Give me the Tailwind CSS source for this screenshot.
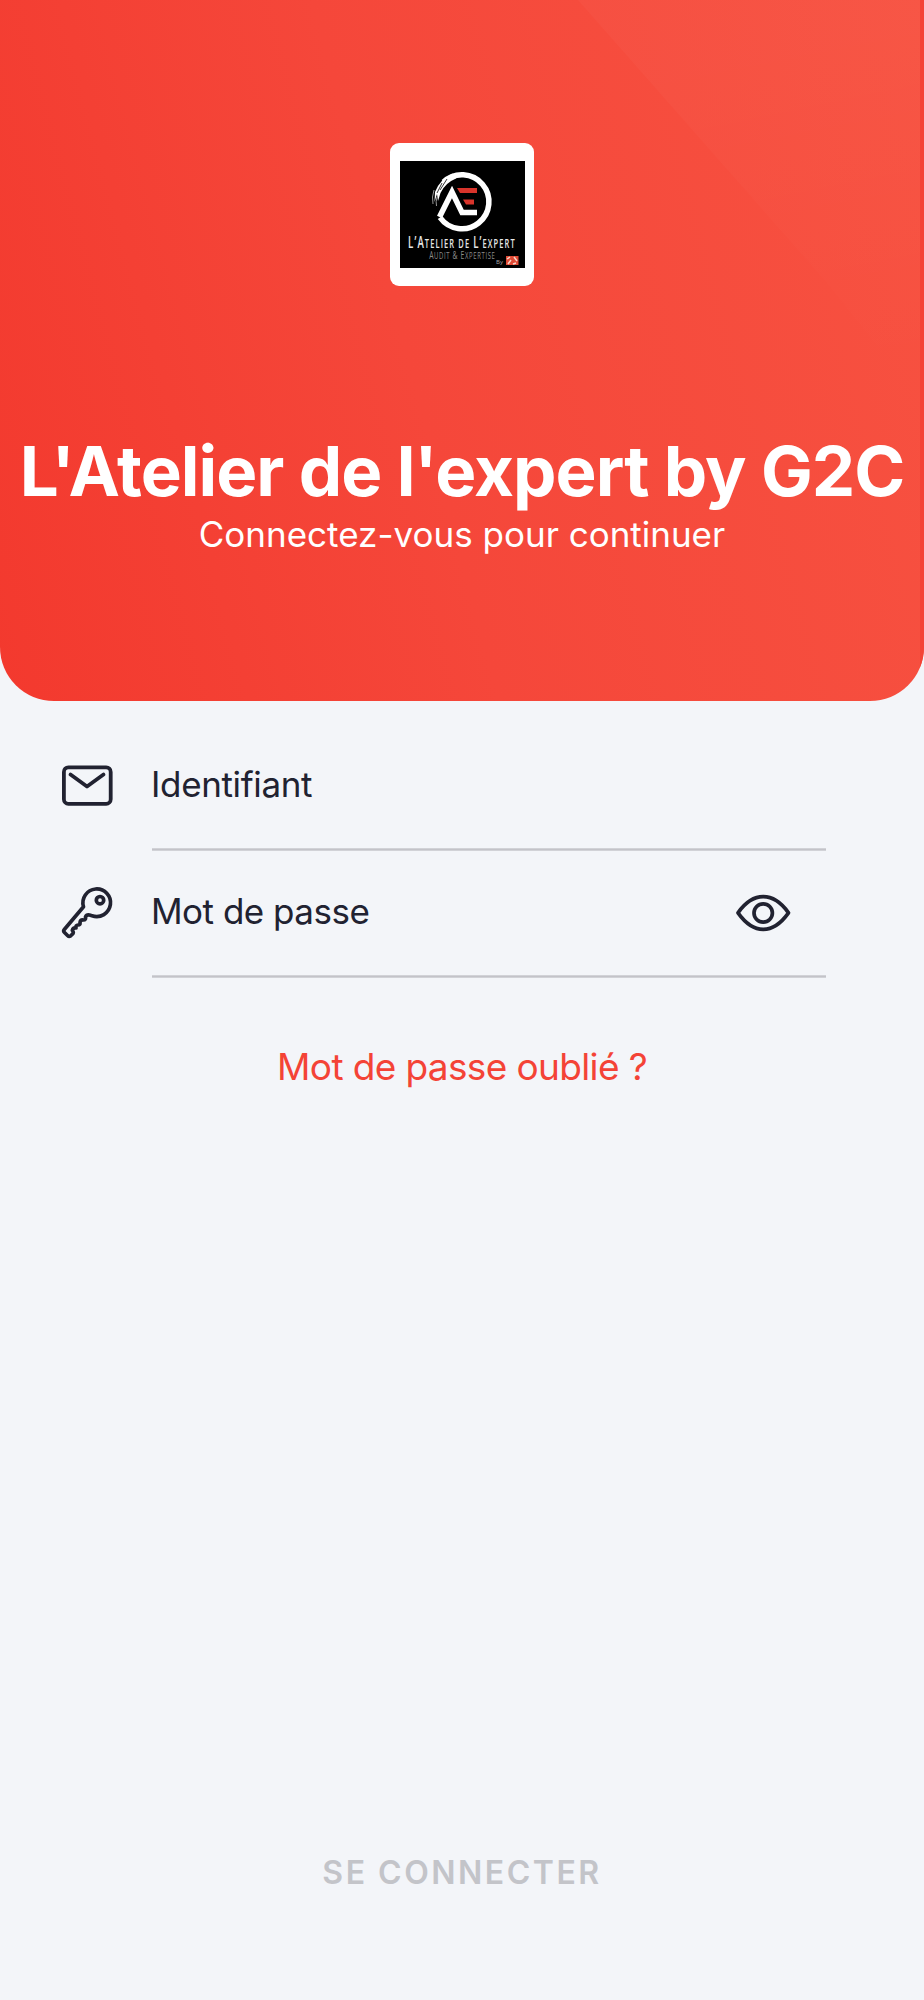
<!DOCTYPE html>
<html lang="fr">
<head>
    <meta charset="UTF-8">
    <meta name="viewport" content="width=device-width, initial-scale=1.0">
    <title>Connexion - L'Atelier de l'expert by G2C</title>
    <script src="https://cdn.jsdelivr.net/npm/@tailwindcss/browser@4"></script>
    <style>
        body { font-family: 'Inter', sans-serif; }
    </style>
</head>
<body class="bg-[#f3f5f9] text-[#212231]">

    <div class="w-[924px] h-[2000px] flex flex-col overflow-hidden">
        <header class="relative h-[701px] shrink-0 flex flex-col items-center rounded-b-[54px] overflow-hidden bg-linear-[75deg,#f3392e_0%,#f5473a_45%,#f75241_100%] text-white">
            <!-- Reflets du fond -->
            <svg class="absolute inset-0" width="924" height="701" viewBox="0 0 924 701" fill="none">
                <defs>
                    <linearGradient id="shine" x1="740" y1="60" x2="800" y2="400" gradientUnits="userSpaceOnUse">
                        <stop stop-color="#fff" stop-opacity=".024"/>
                        <stop offset="1" stop-color="#fff" stop-opacity="0"/>
                    </linearGradient>
                </defs>
                <path d="M578 0H920V400L828 284Z" fill="url(#shine)"/>
                <path d="M920 0H924V701H920Z" fill="#f44336"/>
            </svg>

            <div class="relative mt-[143px] w-[144px] h-[143px] shrink-0 rounded-[9px] bg-white flex items-center justify-center">
                <svg width="125" height="107" viewBox="0 0 125 107" fill="none">
                    <rect width="125" height="107" fill="#000"/>
                    <path d="M40 56.500A27 27 0 1 0 43.500 21" stroke="#fff" stroke-width="5.500"/>
                    <path d="M53 12.500L56 17.500Q45 22 40.500 32L38 40L37 33L34.500 41L35 31Q40 18 53 12.500Z" fill="#fff"/>
                    <path d="M42 22L37 32M47 18L40 29" stroke="#000" stroke-width=".8"/>
                    <path d="M33 43Q31.500 36 34 29M36.500 45Q35.500 41 37 36" stroke="#999" stroke-width="1"/>
                    <path d="M39.500 56L52 31L62 51.500H77" stroke="#fff" stroke-width="5.500"/>
                    <path d="M57 27H77V32H60ZM63 38.500H74V43.500H66Z" fill="#d9342b"/>
                    <!-- Lettres étroites et espacées, en petites capitales -->
                    <g transform="scale(.62 1)" font-family="Open Sans" font-weight="600">
                        <text x="13" y="87.500" textLength="172" font-size="15.500" fill="#e8e8e8">L’A<tspan font-size="12">TELIER DE </tspan>L’<tspan font-size="12">EXPERT</tspan></text>
                        <text x="47" y="98.500" textLength="106" font-size="11" font-weight="400" fill="#8c8c8c">A<tspan font-size="9.500">UDIT</tspan> &amp; E<tspan font-size="9.500">XPERTISE</tspan></text>
                    </g>
                    <text x="96" y="103" font-family="Open Sans" font-size="6" fill="#aaa">By</text>
                    <rect x="106" y="95" width="12.500" height="9" fill="#e04a35"/>
                    <path d="M107 98L110 96M108 103L111 99M114 96L117 100M113 103L116 102" stroke="#f6d5c8" stroke-width="1.500"/>
                </svg>
            </div>

            <h1 class="relative mt-[143px] text-[69px] leading-[84px] tracking-[-1px] font-bold whitespace-nowrap">L'Atelier de l'expert by G2C</h1>
            <p class="relative text-[35px] leading-[42px] whitespace-nowrap">Connectez-vous pour continuer</p>
        </header>

        <form class="pt-[23px] flex flex-col">
            <div class="flex h-[127px]">
                <div class="w-[152px] pl-[62px] pt-[41px]">
                    <svg width="51" height="41" viewBox="0 0 51 41" fill="none" stroke="currentColor" stroke-width="3.800" stroke-linecap="round" stroke-linejoin="round">
                        <rect x="1.900" y="2.400" width="46.800" height="36.400" rx="4.500"/>
                        <path d="M8.500 9.500L25 21.500L41.500 9.500"/>
                    </svg>
                </div>
                <div class="w-[674px] flex flex-col justify-between">
                    <label class="-ml-px pt-[39px] text-[35px] leading-[42px] tracking-[-0.35px]">Identifiant</label>
                    <div class="h-[3px] bg-[#c3c3c9] border-y border-[#d1d2d7]"></div>
                </div>
            </div>

            <div class="flex h-[127px]">
                <div class="w-[152px] pl-[60px] pt-[34px]">
                    <svg width="54" height="56" viewBox="60 885 54 56" fill="none" stroke="currentColor" stroke-width="3.700" stroke-linecap="round" stroke-linejoin="round">
                        <path d="M83.500 906.700A13.800 13.800 0 1 1 92 915.700L89.500 915Q86.500 914.500 85.500 917Q86 920 83.500 920Q80.500 919.500 80 922.500Q80.500 925 78 925Q75.500 925 76 928Q73 927.500 72.300 930.500Q74.500 932.500 72 934.500L70.500 936Q69 937 67.500 935.500L64.500 932.500Q63 931 64.300 929.500Z"/>
                        <circle cx="100" cy="900.200" r="3.700"/>
                    </svg>
                </div>
                <div class="w-[674px] flex flex-col justify-between">
                    <div class="flex justify-between">
                        <label class="-ml-px pt-[39px] text-[35px] leading-[42px] tracking-[-0.5px]">Mot de passe</label>
                        <button type="button" class="mt-[43px] mr-[35px]">
                            <svg width="56" height="38" viewBox="735 894 56 38" fill="none" stroke="currentColor" stroke-width="3.700" stroke-linejoin="round">
                                <path d="M738 912.800C745 903 753 896.700 763.200 896.700S781.500 903 788.500 912.800C781.500 922.600 773.400 929.300 763.200 929.300S745 922.600 738 912.800Z"/>
                                <circle cx="763.200" cy="913" r="9.200"/>
                            </svg>
                        </button>
                    </div>
                    <div class="h-[3px] bg-[#c3c3c9] border-y border-[#d1d2d7]"></div>
                </div>
            </div>
        </form>

        <a href="#" class="mt-[67px] self-center text-[37px] leading-[44px] tracking-[-0.63px] text-[#f44336]">Mot de passe oublié ?</a>

        <button type="submit" class="mt-auto mb-[107px] self-center text-[32px] leading-[40px] tracking-[2.5px] font-semibold text-[#c3c4c9]">SE CONNECTER</button>
    </div>

</body>
</html>
